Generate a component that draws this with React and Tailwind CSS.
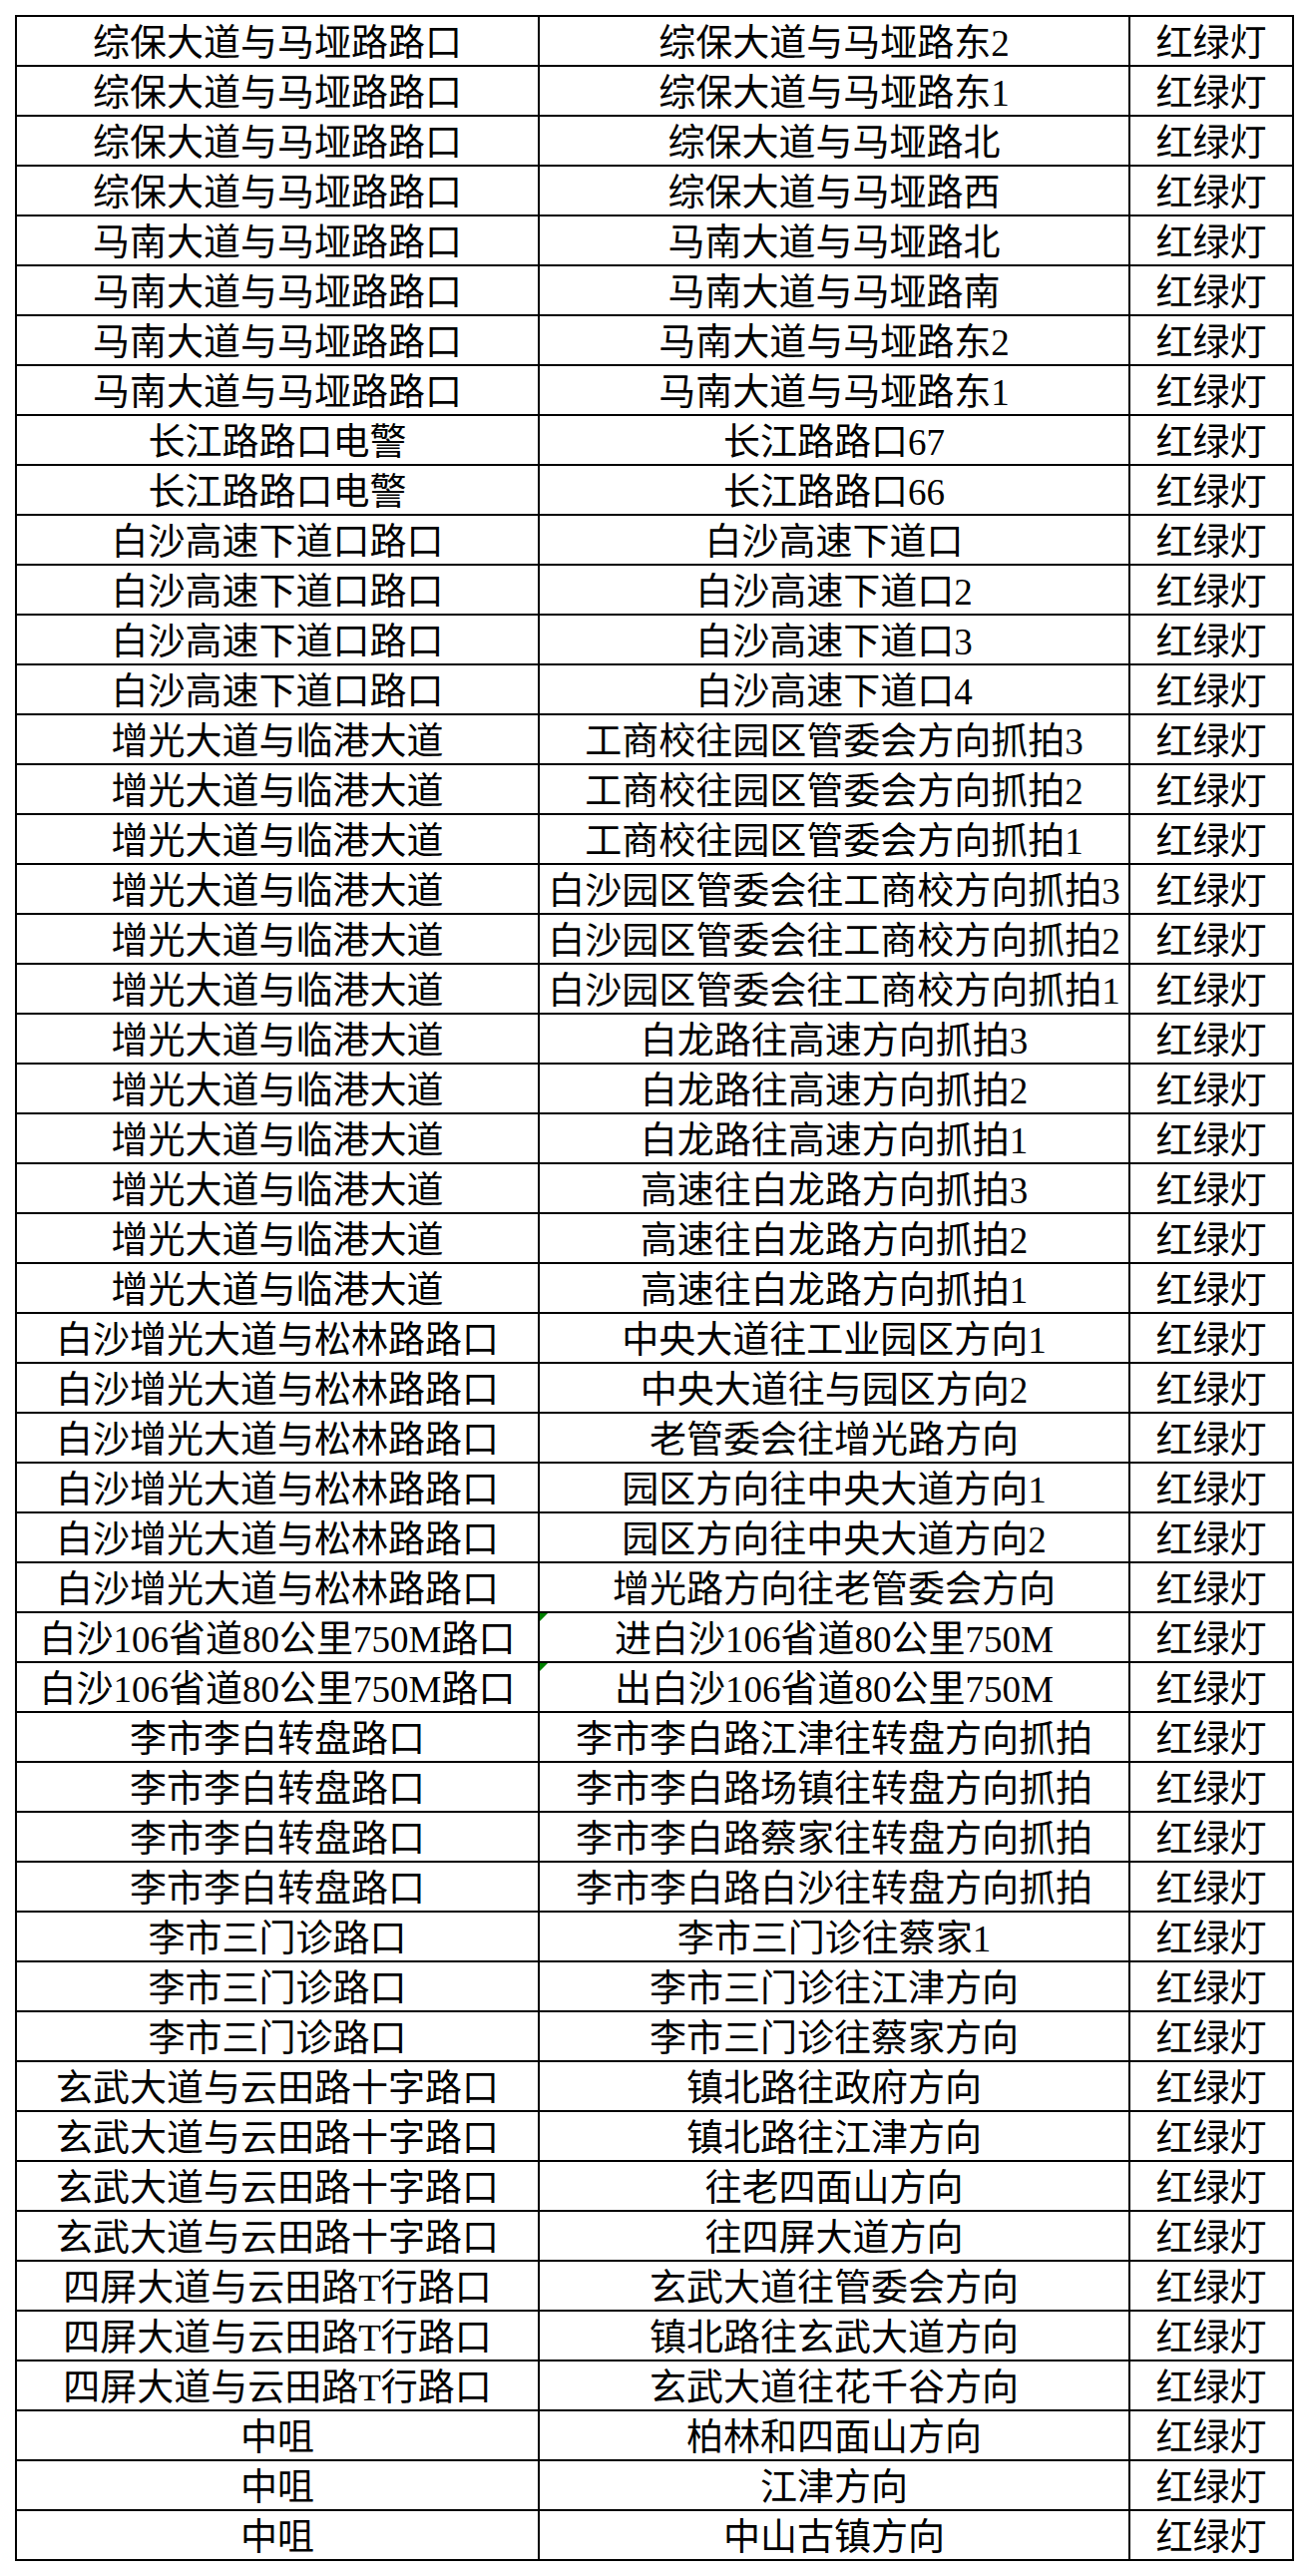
const rows = [
  ['综保大道与马垭路路口', '综保大道与马垭路东2'],
  ['综保大道与马垭路路口', '综保大道与马垭路东1'],
  ['综保大道与马垭路路口', '综保大道与马垭路北'],
  ['综保大道与马垭路路口', '综保大道与马垭路西'],
  ['马南大道与马垭路路口', '马南大道与马垭路北'],
  ['马南大道与马垭路路口', '马南大道与马垭路南'],
  ['马南大道与马垭路路口', '马南大道与马垭路东2'],
  ['马南大道与马垭路路口', '马南大道与马垭路东1'],
  ['长江路路口电警', '长江路路口67'],
  ['长江路路口电警', '长江路路口66'],
  ['白沙高速下道口路口', '白沙高速下道口'],
  ['白沙高速下道口路口', '白沙高速下道口2'],
  ['白沙高速下道口路口', '白沙高速下道口3'],
  ['白沙高速下道口路口', '白沙高速下道口4'],
  ['增光大道与临港大道', '工商校往园区管委会方向抓拍3'],
  ['增光大道与临港大道', '工商校往园区管委会方向抓拍2'],
  ['增光大道与临港大道', '工商校往园区管委会方向抓拍1'],
  ['增光大道与临港大道', '白沙园区管委会往工商校方向抓拍3'],
  ['增光大道与临港大道', '白沙园区管委会往工商校方向抓拍2'],
  ['增光大道与临港大道', '白沙园区管委会往工商校方向抓拍1'],
  ['增光大道与临港大道', '白龙路往高速方向抓拍3'],
  ['增光大道与临港大道', '白龙路往高速方向抓拍2'],
  ['增光大道与临港大道', '白龙路往高速方向抓拍1'],
  ['增光大道与临港大道', '高速往白龙路方向抓拍3'],
  ['增光大道与临港大道', '高速往白龙路方向抓拍2'],
  ['增光大道与临港大道', '高速往白龙路方向抓拍1'],
  ['白沙增光大道与松林路路口', '中央大道往工业园区方向1'],
  ['白沙增光大道与松林路路口', '中央大道往与园区方向2'],
  ['白沙增光大道与松林路路口', '老管委会往增光路方向'],
  ['白沙增光大道与松林路路口', '园区方向往中央大道方向1'],
  ['白沙增光大道与松林路路口', '园区方向往中央大道方向2'],
  ['白沙增光大道与松林路路口', '增光路方向往老管委会方向'],
  ['白沙106省道80公里750M路口', '进白沙106省道80公里750M', true],
  ['白沙106省道80公里750M路口', '出白沙106省道80公里750M', true],
  ['李市李白转盘路口', '李市李白路江津往转盘方向抓拍'],
  ['李市李白转盘路口', '李市李白路场镇往转盘方向抓拍'],
  ['李市李白转盘路口', '李市李白路蔡家往转盘方向抓拍'],
  ['李市李白转盘路口', '李市李白路白沙往转盘方向抓拍'],
  ['李市三门诊路口', '李市三门诊往蔡家1'],
  ['李市三门诊路口', '李市三门诊往江津方向'],
  ['李市三门诊路口', '李市三门诊往蔡家方向'],
  ['玄武大道与云田路十字路口', '镇北路往政府方向'],
  ['玄武大道与云田路十字路口', '镇北路往江津方向'],
  ['玄武大道与云田路十字路口', '往老四面山方向'],
  ['玄武大道与云田路十字路口', '往四屏大道方向'],
  ['四屏大道与云田路T行路口', '玄武大道往管委会方向'],
  ['四屏大道与云田路T行路口', '镇北路往玄武大道方向'],
  ['四屏大道与云田路T行路口', '玄武大道往花千谷方向'],
  ['中咀', '柏林和四面山方向'],
  ['中咀', '江津方向'],
  ['中咀', '中山古镇方向'],
];

const cell =
  'relative bg-white h-[48px] pt-[4px] flex items-center justify-center text-[37px] leading-none text-black whitespace-nowrap overflow-hidden';

export default function App() {
  return (
    <div className="min-h-[2582px] w-[1312px] bg-white pt-[15px] pl-[15px]">
      <div
        className="grid w-[1282px] grid-cols-[522px_590px_162px] gap-[2px] bg-black p-[2px]"
        style={{ fontFamily: '"Liberation Serif", "Noto Sans CJK SC", serif' }}
      >
        {rows.map(([site, point, flagged], i) => (
          <div key={i} className="contents">
            <div className={cell}>{site}</div>
            <div className={cell}>
              {flagged && (
                <svg className="absolute left-0 top-0" width="8" height="8" viewBox="0 0 8 8">
                  <polygon points="0,0 8,0 0,8" fill="#008000" />
                </svg>
              )}
              {point}
            </div>
            <div className={cell}>红绿灯</div>
          </div>
        ))}
      </div>
    </div>
  );
}
